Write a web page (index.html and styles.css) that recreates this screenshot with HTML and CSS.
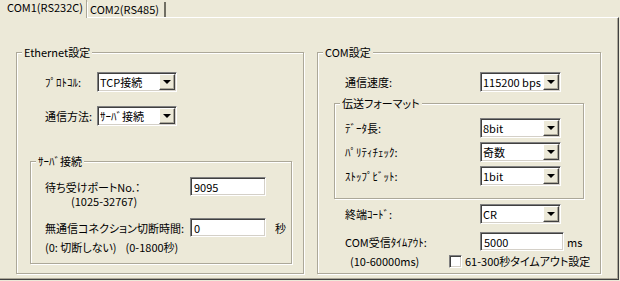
FILE: index.html
```html
<!DOCTYPE html>
<html lang="ja">
<head>
  <meta charset="UTF-8">
  <title>COM設定</title>
  <link rel="stylesheet" href="styles.css">
</head>
<body>
  <div class="tabs">
    <div class="tab active">COM1(RS232C)</div>
    <div class="tab">COM2(RS485)</div>
  </div>

  <div class="pane">
    <!-- 左側: Ethernet設定 -->
    <div class="group eth">
      <div class="group-title">Ethernet設定</div>
      <div class="row eth-row1">
        <span class="lbl eth-lbl">ﾌﾟﾛﾄｺﾙ:</span>
        <div class="combo eth-combo"><span class="val">TCP接続</span><span class="drop"></span></div>
      </div>
      <div class="row eth-row2">
        <span class="lbl eth-lbl">通信方法:</span>
        <div class="combo eth-combo"><span class="val">ｻｰﾊﾞ接続</span><span class="drop"></span></div>
      </div>

      <div class="group server">
        <div class="group-title">ｻｰﾊﾞ接続</div>
        <div class="row server-row1">
          <span class="lbl server-lbl">待ち受けポートNo.：</span>
          <div class="edit server-edit">9095</div>
        </div>
        <div class="note note-port">(1025-32767)</div>
        <div class="row server-row2">
          <span class="lbl server-lbl">無通信コネクション切断時間:</span>
          <div class="edit server-edit">0</div>
          <span class="unit">秒</span>
        </div>
        <div class="note note-cut">(0: 切断しない)<span class="range">(0-1800秒)</span></div>
      </div>
    </div>

    <!-- 右側: COM設定 -->
    <div class="group com">
      <div class="group-title">COM設定</div>
      <div class="row com-row1">
        <span class="lbl com-lbl">通信速度:</span>
        <div class="combo com-combo"><span class="val">115200 bps</span><span class="drop"></span></div>
      </div>

      <div class="group format">
        <div class="group-title">伝送フォーマット</div>
        <div class="row fmt-row fmt-first">
          <span class="lbl fmt-lbl">ﾃﾞｰﾀ長:</span>
          <div class="combo com-combo"><span class="val">8bit</span><span class="drop"></span></div>
        </div>
        <div class="row fmt-row">
          <span class="lbl fmt-lbl">ﾊﾟﾘﾃｨﾁｪｯｸ:</span>
          <div class="combo com-combo"><span class="val">奇数</span><span class="drop"></span></div>
        </div>
        <div class="row fmt-row">
          <span class="lbl fmt-lbl">ｽﾄｯﾌﾟﾋﾞｯﾄ:</span>
          <div class="combo com-combo"><span class="val">1bit</span><span class="drop"></span></div>
        </div>
      </div>

      <div class="row com-row-term">
        <span class="lbl com-lbl">終端ｺｰﾄﾞ:</span>
        <div class="combo com-combo"><span class="val">CR</span><span class="drop"></span></div>
      </div>
      <div class="row com-row-timeout">
        <span class="lbl com-lbl">COM受信ﾀｲﾑｱｳﾄ:</span>
        <div class="edit timeout-edit">5000</div>
        <span class="unit-ms">ms</span>
      </div>
      <div class="row com-row-last">
        <span class="note-ms">(10-60000ms)</span>
        <span class="check"></span>
        <span class="check-text">61-300秒タイムアウト設定</span>
      </div>
    </div>
  </div>
</body>
</html>
```

FILE: styles.css
```css
body {
    margin: 0;
    background-color: #ece9d8;
    font-family: "Noto Sans CJK JP", "DejaVu Sans", sans-serif;
    font-size: 11px;
    line-height: 14px;
    color: #000;
    font-feature-settings: "palt";
}

/* タブ */
.tabs {
    display: flex;
    align-items: flex-end;
    height: 17px;
}
.tab {
    width: 79px;
    height: 15px;
    padding: 0 0 0 2px;
    border-left: 1px solid #fff;
    border-right: 2px solid #716f64;
    box-sizing: border-box;
    line-height: 14px;
    white-space: nowrap;
}
.tab.active {
    position: relative;
    width: 87px;
    height: 18px;
    margin-bottom: -1px;
    padding: 0 0 0 7px;
    border-left: none;
    border-right: 1px solid #aca899;
    background-color: #ece9d8;
}

/* ページ */
.pane {
    display: flex;
    gap: 13px;
    width: 619px;
    height: 263px;
    box-sizing: border-box;
    padding: 34px 0 0 16px;
    border-top: 1px solid #fff;
    border-right: 1px solid #404040;
    border-bottom: 1px solid #404040;
    box-shadow: inset -1px -1px 0 #aca899;
}

/* グループボックス */
.group {
    border: 1px solid #aca899;
    box-shadow: inset 1px 1px 0 #fff, 1px 1px 0 #fff;
    box-sizing: border-box;
}
.group-title {
    width: fit-content;
    margin: -8px 0 0 5px;
    padding: 0 2px;
    background-color: #ece9d8;
    white-space: nowrap;
}
.eth {
    width: 288px;
    height: 222px;
}
.com {
    width: 284px;
    height: 222px;
}
.server {
    height: 103px;
    margin: 35px 11px 0 13px;
}
.format {
    height: 96px;
    margin: 11px 16px 0 16px;
}

.row {
    display: flex;
    align-items: center;
}
.lbl {
    white-space: nowrap;
}
.eth-row1 { margin: 13px 0 0 28px; }
.eth-row2 { margin: 14px 0 0 28px; }
.eth-lbl { width: 52px; }

.server-row1 { margin: 9px 0 0 14px; }
.server-row2 { margin: 10px 0 0 14px; }
.server-lbl { width: 145px; }
.note { white-space: nowrap; }
.note-port { margin: -2px 0 0 40px; }
.note-cut { margin: 3px 0 0 14px; }
.note-cut .range { margin-left: 9px; }
.unit { margin-left: 9px; }

.com-row1 { margin: 13px 0 0 27px; }
.com-lbl { width: 135px; }
.fmt-lbl { width: 135px; }
.fmt-row { margin: 4px 0 0 10px; }
.fmt-first { margin-top: 8px; }
.com-row-term { margin: 5px 0 0 27px; }
.com-row-timeout { margin: 8px 0 0 27px; }
.com-row-last { margin: 2px 0 0 32px; height: 16px; }
.unit-ms { margin-left: 3px; }
.note-ms { width: 99px; white-space: nowrap; }

/* コンボボックス */
.combo {
    display: flex;
    align-items: center;
    height: 20px;
    box-sizing: border-box;
    background-color: #fff;
    border: 1px solid;
    border-color: #808080 #fff #fff #808080;
    box-shadow: inset 1px 1px 0 #404040, inset -1px -1px 0 #d4d0c8;
    padding: 1px 1px 1px 2px;
}
.eth-combo { width: 80px; }
.com-combo { width: 81px; }
.combo .val {
    flex: 1;
    white-space: nowrap;
}
.drop {
    position: relative;
    width: 16px;
    height: 16px;
    box-sizing: border-box;
    background-color: #ece9d8;
    border-top: 1px solid #fff;
    border-left: 1px solid #fff;
    border-right: 1px solid #404040;
    border-bottom: 1px solid #404040;
    box-shadow: inset -1px -1px 0 #aca899;
}
.drop::after {
    content: "";
    position: absolute;
    left: 3px;
    top: 5px;
    border-left: 4px solid transparent;
    border-right: 4px solid transparent;
    border-top: 4px solid #000;
}

/* テキストボックス */
.edit {
    height: 19px;
    box-sizing: border-box;
    background-color: #fff;
    border: 1px solid;
    border-color: #808080 #fff #fff #808080;
    box-shadow: inset 1px 1px 0 #404040, inset -1px -1px 0 #d4d0c8;
    padding: 2px 0 0 3px;
}
.server-edit { width: 76px; }
.timeout-edit { width: 84px; }

/* チェックボックス */
.check {
    width: 13px;
    height: 13px;
    box-sizing: border-box;
    background-color: #fff;
    border: 1px solid;
    border-color: #808080 #fff #fff #808080;
    box-shadow: inset 1px 1px 0 #404040, inset -1px -1px 0 #d4d0c8;
}
.check-text {
    margin-left: 3px;
    white-space: nowrap;
}
```
